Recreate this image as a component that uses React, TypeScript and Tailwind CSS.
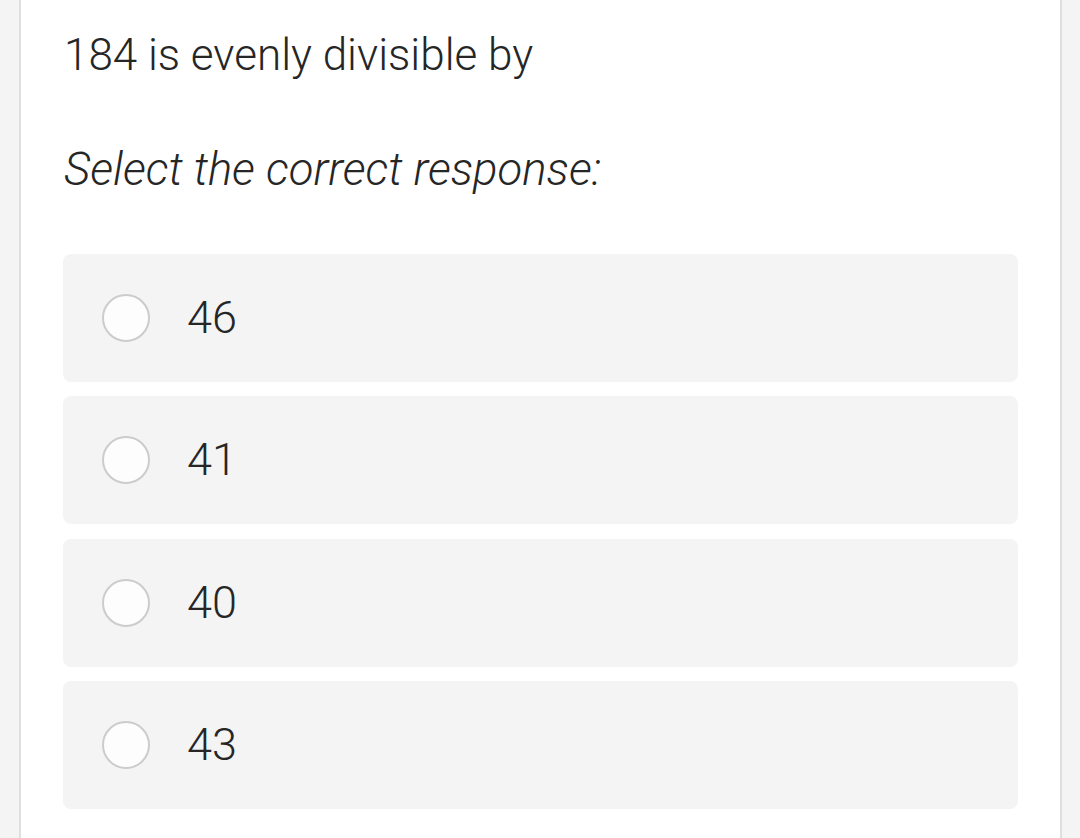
import React from "react";

const options = ["46", "41", "40", "43"];

export default function App() {
  return (
    <div
      className="min-h-[838px] w-[1080px] bg-[#f4f4f4] pl-[19px]"
      style={{ fontFamily: "Roboto, 'Liberation Sans', sans-serif" }}
    >
      <div className="min-h-[838px] w-[1043px] border-x-2 border-[#dfdfdf] bg-white px-[42px] pt-[28px]">
        <h1 className="pl-[1px] text-[44px] leading-[54px] font-light text-[#262626]">
          184 is evenly divisible by
        </h1>
        <p className="mt-[61px] pl-[1px] text-[45.5px] leading-[54px] font-light italic text-[#262626]">
          Select the correct response:
        </p>
        <div className="mt-[57px] flex flex-col gap-[14.33px]">
          {options.map((o) => (
            <div
              key={o}
              className="flex h-[128px] items-center rounded-[8px] bg-[#f4f4f4] pl-[39px]"
            >
              <span className="box-border h-[48px] w-[48px] rounded-full border-2 border-[#cccccc] bg-[#fdfdfd]" />
              <span className="ml-[37px] text-[45px] leading-[54px] font-light text-[#262626]">
                {o}
              </span>
            </div>
          ))}
        </div>
      </div>
    </div>
  );
}
